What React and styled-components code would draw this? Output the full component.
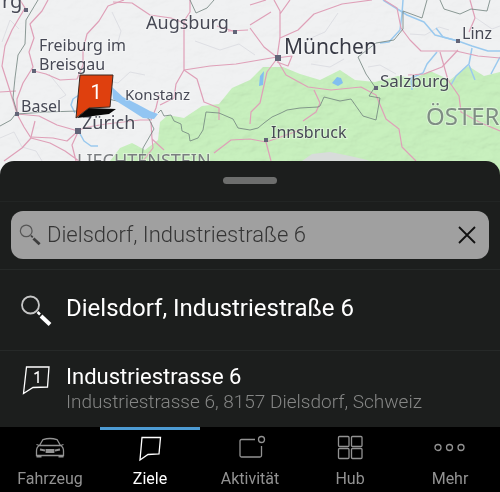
import React, { useState } from 'react';
import styled, { createGlobalStyle } from 'styled-components';

const GlobalStyle = createGlobalStyle`
* {
  box-sizing: border-box;
}
body {
  margin: 0;
  background-color: #000;
  font-family: Roboto, "Liberation Sans", sans-serif;
}
`;

const Page = styled.div`
  display: flex;
  flex-direction: column;
  min-height: 100vh;
`;

const MapArea = styled.div`
  height: 176px;
`;

const MapCanvas = styled.svg`
  display: block;
  width: 100%;
  height: 100%;
  background-color: #f0f1f2;
`;

const Place = styled.text`
  font-family: "Noto Sans", sans-serif;
  font-size: ${(props) => props.$size}px;
  fill: ${(props) => props.$color || "#474955"};
  stroke: rgba(255, 255, 255, 0.35);
  stroke-width: 2px;
  paint-order: stroke;
`;

const PinNumber = styled.text`
  font-family: Roboto, sans-serif;
  font-size: 20px;
  fill: #fff;
  text-anchor: middle;
`;

const Sheet = styled.main`
  flex: 1;
  display: flex;
  flex-direction: column;
  margin-top: -15px;
  background-color: #1c1e1d;
  border-radius: 14px 14px 0 0;
`;

const Grip = styled.div`
  width: 54px;
  height: 7px;
  margin: 16px auto 17px;
  border-radius: 4px;
  background-color: #6d6e6d;
`;

const SearchArea = styled.form`
  padding: 9px 11px 10px;
  border-top: 1px solid #222524;
`;

const SearchBox = styled.div`
  display: flex;
  align-items: center;
  height: 48px;
  padding: 0 8px;
  border-radius: 12px;
  background-color: #a0a0a0;
`;

const SearchInput = styled.input`
  flex: 1;
  min-width: 0;
  padding: 0 0 2px 6px;
  border: none;
  outline: none;
  background: transparent;
  color: #353535;
  font-family: inherit;
  font-size: 22px;
  font-weight: 300;
`;

const ClearButton = styled.button`
  display: flex;
  padding: 4px;
  border: none;
  background: transparent;
  cursor: pointer;
`;

const Results = styled.ul`
  margin: 0;
  padding: 0;
  list-style: none;
`;

const Result = styled.li`
  border-top: 1px solid #262928;
`;

const ResultButton = styled.button`
  display: flex;
  align-items: flex-start;
  width: 100%;
  min-height: ${(props) => (props.$tall ? 80 : 76)}px;
  padding: ${(props) => (props.$tall ? 25 : 13)}px 20px 12px;
  gap: 14px;
  border: none;
  background: transparent;
  text-align: left;
  font-family: inherit;
  cursor: pointer;
`;

const ResultText = styled.span`
  display: flex;
  flex-direction: column;
`;

const ResultTitle = styled.span`
  color: #fff;
  font-size: ${(props) => (props.$large ? 24 : 22)}px;
  line-height: 26px;
`;

const ResultAddress = styled.span`
  color: #858685;
  font-size: 19px;
  font-weight: 300;
  line-height: 24px;
`;

const TabBar = styled.nav`
  display: flex;
  height: 66px;
  background-color: #000;
`;

const Tab = styled.a`
  flex: 1;
  display: flex;
  flex-direction: column;
  align-items: center;
  padding-top: 6px;
  gap: 5px;
  border-top: 3px solid ${(props) => (props.$active ? "#4d9bd3" : "transparent")};
  color: ${(props) => (props.$active ? "#fff" : "#929292")};
  font-size: 16px;
  line-height: 24px;
  text-decoration: none;
`;

const TabIcon = styled.svg`
  width: 32px;
  height: 26px;
  fill: none;
  stroke: currentColor;
  stroke-width: 1.3;
  overflow: visible;
`;

const towns = [
  { x: 26, y: 10, r: 2 },
  { x: 34, y: 71, r: 2 },
  { x: 17, y: 114, r: 2 },
  { x: 78, y: 131, r: 3 },
  { x: 235, y: 32, r: 2 },
  { x: 278, y: 58, r: 3 },
  { x: 458, y: 41, r: 2 },
  { x: 376, y: 88, r: 2 },
  { x: 266, y: 140, r: 2 },
];

const places = [
  { name: "rg", x: 2, y: 8, size: 20 },
  { name: "Augsburg", x: 146, y: 29, size: 18 },
  { name: "Freiburg im", x: 39, y: 51, size: 16 },
  { name: "Breisgau", x: 39, y: 70, size: 16 },
  { name: "Basel", x: 21, y: 112, size: 16 },
  { name: "Zürich", x: 82, y: 129, size: 18 },
  { name: "Konstanz", x: 125, y: 100, size: 15 },
  { name: "München", x: 284, y: 54, size: 21, color: "#383a45" },
  { name: "Linz", x: 462, y: 39, size: 16 },
  { name: "Salzburg", x: 380, y: 87, size: 17 },
  { name: "Innsbruck", x: 271, y: 138, size: 16 },
  { name: "LIECHTENSTEIN", x: 77, y: 167, size: 18, color: "#7a7d80" },
  { name: "ÖSTERREICH", x: 426, y: 125, size: 24, color: "#7f8d84" },
];

const roads = [
  "M48 0L42 11L30 24L34 38L29 52L33 67L23 83L17 99L17 114",
  "M20 0L25 8L12 30L5 46L2 66L10 91L17 114L24 127L31 138L22 148L4 161",
  "M17 114L39 116L57 125L78 131L67 141L53 138L31 137",
  "M31 138L50 143L65 151L79 161M78 132L72 145L76 161",
  "M79 130L88 127L106 124L140 120L151 120L156 108L159 95",
  "M34 71L46 74L60 80L77 79L83 65L83 50L87 34L99 21L108 6L124 0",
  "M113 2L132 3L150 15L171 18L187 24",
  "M190 0L190 12L184 21L184 38L184 70L176 84L174 98L160 105",
  "M184 70L197 79L204 102L219 108L219 120",
  "M184 70L210 66L236 64L277 57M228 31L248 30",
  "M152 138L153 148L143 161M151 122L152 139L164 150",
  "M214 153L231 140L250 139L266 142L278 138L300 130",
  "M266 142L271 161M250 124L251 112L260 103L267 72L276 60",
  "M274 0L280 11L280 37L277 58M290 0L280 14",
  "M250 28L264 47L278 58M250 25L271 12M276 58L292 56L288 66L277 62",
  "M280 38L298 30L314 14L342 4L372 0",
  "M276 58L286 75L308 87L331 90L361 87L376 95L386 119L399 129L402 147L416 161",
  "M314 90L320 103L316 112L303 121",
  "M384 0L397 8L401 28L410 40L421 51L456 51L478 56L500 58",
  "M440 52L448 80L459 96L461 112L479 122L500 131",
  "M458 50L442 67L424 74L408 75",
  "M470 0L475 18L469 32M250 5L266 0",
  "M0 92L16 91M31 137L35 121M217 26L236 32",
];

const borders = [
  "M38 0L26 20L25 44L18 55L15 78L13 98L17 112L11 120L0 126",
  "M17 114L46 112L78 111L108 99L122 102L139 112L149 119L154 129L143 148L142 161",
  "M158 113L161 110L164 116L171 115L174 121L181 124L182 131L189 134L190 141L198 138L203 130L206 112L219 113L226 116L233 119L238 128L250 130L258 128L264 123L272 117L281 113L287 110L300 108L318 107L320 106L324 97L340 101L351 99L363 116L376 120L380 98L369 96L375 87L366 74L358 57L376 43L394 40L403 29L403 11L422 18L427 0",
  "M440 0L444 9L460 14L471 9L487 11L490 0",
  "M190 0L196 13L207 8L214 0",
];

const rivers = [
  "M79 132L84 141L91 146L98 146",
  "M75 113L71 105L73 99L79 95",
  "M383 0L399 10L407 15L424 22L435 35L458 41L472 46L488 51L500 51",
  "M403 0L402 14L400 30L389 42L380 43",
  "M437 52L427 64L423 73L411 78L412 90M472 48L469 64L456 76L451 85",
  "M469 65L475 80M436 28L443 37L458 41M500 57L491 74",
];

const foothills = [
  "M0 138L14 132L22 147L36 151L42 161M2 42L10 20L19 29M49 74L66 95L56 101",
  "M95 108L90 91L104 80L118 83L130 72L145 75M112 12L121 31L116 49",
  "M195 41L220 50L239 44L255 55M304 41L325 32L338 13M311 64L330 67L344 59",
  "M368 67L380 65L396 74M410 34L425 35L439 27L449 30M476 18L492 29L500 26",
];

const SearchIcon = ({ size, color }) => (
  <svg width={size} height={size} viewBox="0 0 32 32" fill="none" stroke={color} aria-hidden="true">
    <circle cx="10.5" cy="10" r="8.5" strokeWidth="1.8" opacity="0.75" />
    <path d="M17.5 17l2.500 2.500" strokeWidth="2.5" />
    <path d="M21 21l9 8.500" strokeWidth="4" />
  </svg>
);

const RouteMap = () => (
  <MapArea>
    <MapCanvas viewBox="0 0 500 176" preserveAspectRatio="xMidYMin slice" role="img" aria-label="Karte">
      <defs>
        <filter id="relief" x="0" y="0" width="100%" height="100%">
          <feTurbulence type="fractalNoise" baseFrequency="0.055 0.09" numOctaves="4" seed="8" />
          <feDiffuseLighting surfaceScale="3" lightingColor="#fff">
            <feDistantLight azimuth="230" elevation="62" />
          </feDiffuseLighting>
        </filter>
        <clipPath id="green">
          <path d="M110 161L120 148L132 143L145 150L158 140L160 122L168 115L184 118L202 106L219 104L232 88L250 80L263 67L283 67L300 74L320 80L340 70L355 80L375 82L398 76L415 78L430 71L450 80L468 66L484 76L500 72V176H110Z" />
        </clipPath>
      </defs>
      <rect width="500" height="176" filter="url(#relief)" opacity="0.06" style={{ mixBlendMode: 'multiply' }} />
      <g clipPath="url(#green)">
        <rect width="500" height="176" fill="#c8f0be" />
        <rect width="500" height="176" filter="url(#relief)" opacity="0.16" style={{ mixBlendMode: 'multiply' }} />
      </g>
      <path d="M302 161L312 154L330 152L350 156L367 160L380 164V176H285Z" fill="#d8dcda" />
      <g fill="none" strokeLinejoin="round">
        {foothills.map((d) => <path key={d} d={d} stroke="#dedfe4" strokeWidth="1" />)}
        {rivers.map((d) => <path key={d} d={d} stroke="#9ac9ee" strokeWidth="1.5" />)}
        {roads.map((d) => <path key={d} d={d} stroke="#dfa0b8" strokeWidth="1.2" />)}
        {borders.map((d) => <path key={d} d={d} stroke="#70827c" strokeWidth="0.8" />)}
      </g>
      <path d="M112 87L123 97L137 104L150 111L158 114L154 119L143 118L129 109L113 99Z" fill="#92c5f2" />
      <path d="M260 76l4-5l-1 14l-4 1zM332 83l5-6l4 1l2 5l-5 3z" fill="#82bff0" />
      {towns.map((t) => (
        <rect key={`${t.x}-${t.y}`} x={t.x - t.r} y={t.y - t.r} width={t.r * 2} height={t.r * 2} fill="#626477" />
      ))}
      {places.map((p) => (
        <Place key={p.name} x={p.x} y={p.y} $size={p.size} $color={p.color}>{p.name}</Place>
      ))}
      <path d="M77 118L88 108L116 109L109 114L85 117Z" fill="#090909" />
      <path d="M80 75L113 75L110 107L89 108L76 118Z" fill="#df400e" stroke="#3b2921" strokeWidth="1" />
      <PinNumber x="96" y="99">1</PinNumber>
    </MapCanvas>
  </MapArea>
);

const tabs = [
  {
    name: "Fahrzeug",
    icon: (
      <>
        <path d="M5.500 9.500L9 3.500Q16 1.500 23 3.500L26.500 9.500M2.500 8.500l3 1M29.500 8.500l-3 1M5.500 9.500H26.500Q29.500 11 29.500 15V19.500H2.500V15Q2.500 11 5.500 9.500Z" />
        <path d="M6 13.500l5 1M26 13.500l-5 1M12.500 14h3v2h-3zM16.500 14h3v2h-3zM2.500 20.500h5M24.500 20.500h5" strokeWidth="1.8" />
      </>
    ),
  },
  { name: "Ziele", icon: <path d="M8 1.500H26.500L25 18L14 18.500L6 24Z" /> },
  {
    name: "Aktivität",
    icon: (
      <>
        <path d="M21 3.500H7.500Q6 3.500 6 5V19.500Q6 21 7.500 21H26Q27.500 21 27.500 19.500V10" />
        <circle cx="27.5" cy="3.500" r="3" />
      </>
    ),
  },
  {
    name: "Hub",
    icon: (
      <>
        <rect x="4.5" y="0.500" width="10.500" height="10" rx="1" />
        <rect x="17.5" y="0.500" width="10.500" height="10" rx="1" />
        <rect x="4.5" y="12.500" width="10.500" height="10" rx="1" />
        <rect x="17.5" y="12.500" width="10.500" height="10" rx="1" />
      </>
    ),
  },
  {
    name: "Mehr",
    icon: (
      <>
        <circle cx="4" cy="11.500" r="3" />
        <circle cx="15.500" cy="11.500" r="3" />
        <circle cx="27" cy="11.500" r="3" />
      </>
    ),
  },
];

const App = () => {
  const [query, setQuery] = useState("Dielsdorf, Industriestraße 6");
  const [active, setActive] = useState("Ziele");

  return (
    <Page>
      <GlobalStyle />
      <RouteMap />
      <Sheet>
        <Grip />
        <SearchArea onSubmit={(e) => e.preventDefault()}>
          <SearchBox>
            <SearchIcon size={22} color="#3d3d3d" />
            <SearchInput aria-label="Ziel suchen" value={query} onChange={(e) => setQuery(e.target.value)} />
            <ClearButton type="button" aria-label="Löschen" onClick={() => setQuery("")}>
              <svg width="20" height="20" viewBox="0 0 20 20" stroke="#111" strokeWidth="1.8" aria-hidden="true">
                <path d="M2 2l16 16M18 2L2 18" />
              </svg>
            </ClearButton>
          </SearchBox>
        </SearchArea>
        <Results>
          <Result>
            <ResultButton type="button" $tall>
              <SearchIcon size={32} color="#fff" />
              <ResultTitle $large>Dielsdorf, Industriestraße 6</ResultTitle>
            </ResultButton>
          </Result>
          <Result>
            <ResultButton type="button">
              <svg width="32" height="32" viewBox="0 0 32 32" fill="none" stroke="#fff" strokeWidth="1.3" aria-hidden="true">
                <path d="M6.500 3H29L27.500 23L13 23.500L3.500 29.500Z" />
                <path d="M14.500 10L18 8V19" strokeWidth="1.5" />
              </svg>
              <ResultText>
                <ResultTitle>Industriestrasse 6</ResultTitle>
                <ResultAddress>Industriestrasse 6, 8157 Dielsdorf, Schweiz</ResultAddress>
              </ResultText>
            </ResultButton>
          </Result>
        </Results>
      </Sheet>
      <TabBar>
        {tabs.map((tab) => (
          <Tab
            key={tab.name}
            href={`#${tab.name}`}
            $active={tab.name === active}
            aria-current={tab.name === active ? "page" : undefined}
            onClick={() => setActive(tab.name)}
          >
            <TabIcon viewBox="0 0 32 26" aria-hidden="true">{tab.icon}</TabIcon>
            {tab.name}
          </Tab>
        ))}
      </TabBar>
    </Page>
  );
};

export default App;
